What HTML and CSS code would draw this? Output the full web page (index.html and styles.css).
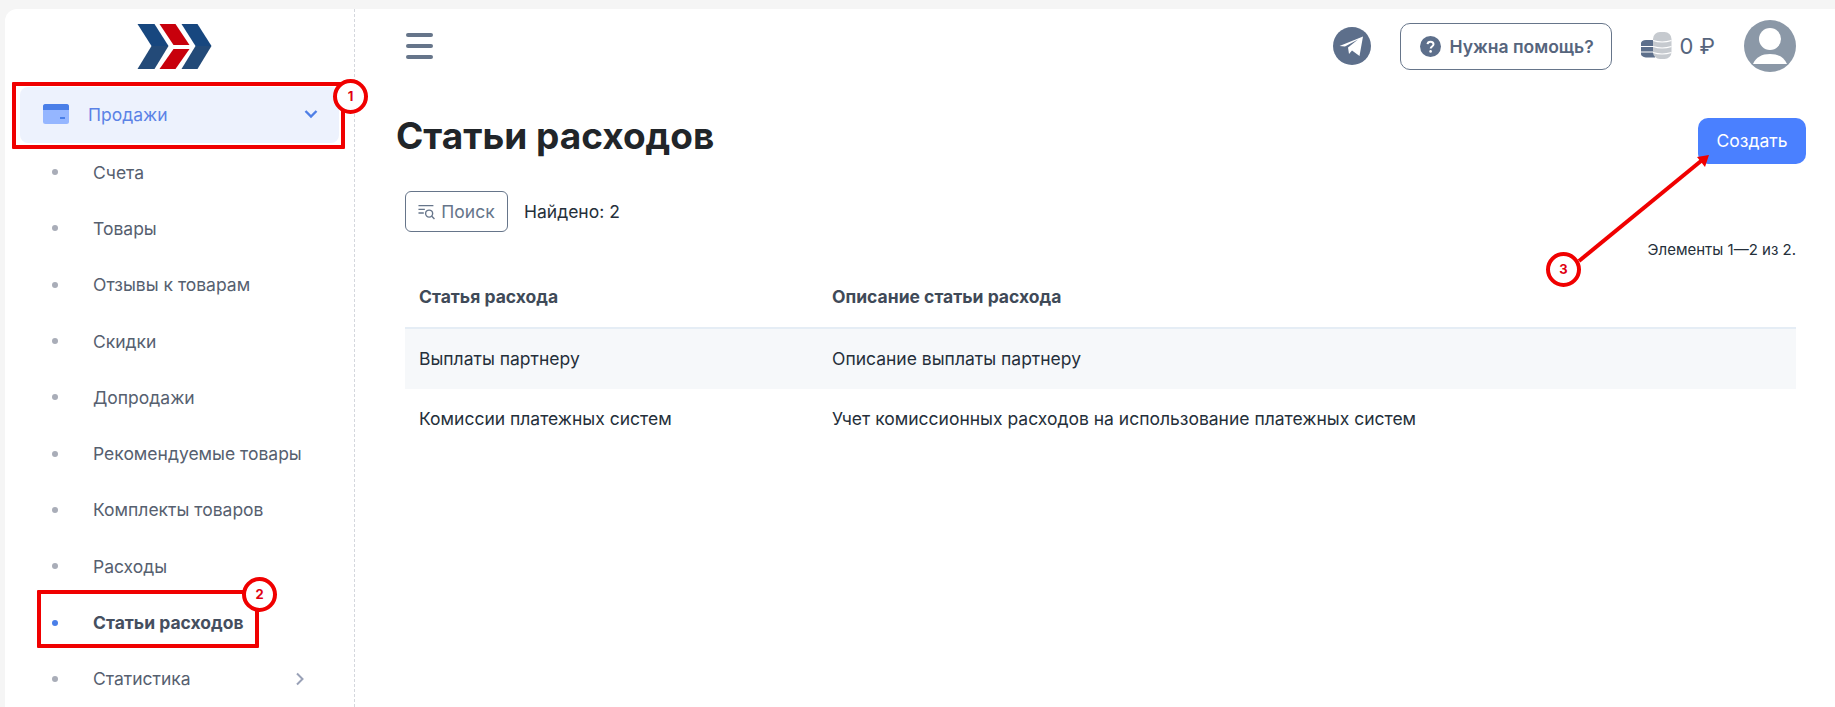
FILE: index.html
```html
<!DOCTYPE html>
<html lang="ru">
<head>
<meta charset="utf-8">
<title>Статьи расходов</title>
<link rel="stylesheet" href="styles.css">
</head>
<body>
<div class="app">
  <aside class="sidebar">
    <div class="logo">
      <svg width="76" height="46" viewBox="0 0 75 46">
        <path d="M0 0H17L31 22H14Z" fill="#17477f"/>
        <path d="M14 22H31L17 45H0Z" fill="#234a78"/>
        <path d="M22 0H38L52 21H36Z" fill="#c8000c"/>
        <path d="M36 25H52L38 45H22Z" fill="#c8000c"/>
        <path d="M44 0H60L74 22H58Z" fill="#17477f"/>
        <path d="M58 22H74L60 45H44Z" fill="#234a78"/>
      </svg>
    </div>
    <nav class="menu">
      <a class="menu-head">
        <svg class="card-icon" width="26" height="20" viewBox="0 0 26 20">
          <rect width="26" height="20" rx="2.5" fill="#95b6ff"/>
          <path d="M0 2.5A2.5 2.5 0 0 1 2.5 0h21A2.5 2.5 0 0 1 26 2.5V6H0Z" fill="#4a7fe8"/>
          <rect x="17" y="13" width="5" height="2" fill="#4a7fe8"/>
        </svg>
        <span class="menu-head-label">Продажи</span>
        <svg width="14" height="10" viewBox="0 0 14 10"><path d="M1.500 2 7 7.500 12.500 2" fill="none" stroke="#4f7fe6" stroke-width="2.400"/></svg>
      </a>
      <ul class="submenu">
        <li class="sub-item"><i class="dot"></i>Счета</li>
        <li class="sub-item"><i class="dot"></i>Товары</li>
        <li class="sub-item"><i class="dot"></i>Отзывы к товарам</li>
        <li class="sub-item"><i class="dot"></i>Скидки</li>
        <li class="sub-item"><i class="dot"></i>Допродажи</li>
        <li class="sub-item"><i class="dot"></i>Рекомендуемые товары</li>
        <li class="sub-item"><i class="dot"></i>Комплекты товаров</li>
        <li class="sub-item"><i class="dot"></i>Расходы</li>
        <li class="sub-item current"><i class="dot"></i>Статьи расходов</li>
        <li class="sub-item"><i class="dot"></i>Статистика
          <svg class="chev" width="10" height="14" viewBox="0 0 10 14"><path d="M2 1.500 7.500 7 2 12.500" fill="none" stroke="#99a1b7" stroke-width="2"/></svg>
        </li>
      </ul>
    </nav>
  </aside>
  <main class="main">
    <header class="topbar">
      <button class="burger" aria-label="Меню"><span></span><span></span><span></span></button>
      <div class="top-right">
        <svg width="38" height="38" viewBox="0 0 38 38">
          <circle cx="19" cy="19" r="19" fill="#5d6f8b"/>
          <path d="M6.500 19 30 9.500 26.500 29 19 23.500l-3 3.500-1-6.500 10-8-13 7Z" fill="#fff"/>
        </svg>
        <a class="help">
          <svg width="21" height="21" viewBox="0 0 21 21"><circle cx="10.500" cy="10.500" r="10.500" fill="#5d6f8b"/><path d="M7.500 8.200c.2-1.700 1.400-2.500 3-2.500 1.800 0 3 1 3 2.500 0 2.300-2.800 2.200-2.800 4.300" fill="none" stroke="#fff" stroke-width="2"/><circle cx="10.600" cy="15.400" r="1.300" fill="#fff"/></svg>
          Нужна помощь?
        </a>
        <div class="balance">
          <svg width="31" height="28" viewBox="0 0 31 28">
            <path d="M14 8H5C2 8 0 9.500 0 11v11c0 2 3 3.500 6 3.500h8Z" fill="#5d6f8b"/>
            <path d="M0 14.500h14M0 20h14" stroke="#fff" stroke-width="1.200"/>
            <rect x="12" y="0" width="18.500" height="27" rx="7" fill="#c6cacf"/>
            <path d="M12 8.500q9 3 18.500 0M12 14.500q9 3 18.500 0M12 20.500q9 3 18.500 0" fill="none" stroke="#fff" stroke-width="1.200"/>
          </svg>
          <span>0 ₽</span>
        </div>
        <svg width="52" height="52" viewBox="0 0 52 52">
          <circle cx="26" cy="26" r="26" fill="#8b98a7"/>
          <circle cx="26" cy="19" r="11" fill="#fff"/>
          <path d="M9 44C12 37 18 34 26 34s14 3 17 10Z" fill="#fff"/>
        </svg>
      </div>
    </header>
    <div class="title-row">
      <h1 class="title">Статьи расходов</h1>
      <a class="create">Создать</a>
    </div>
    <div class="tools">
      <a class="search">
        <svg width="18" height="16" viewBox="0 0 16 15"><g fill="none" stroke="#66758a" stroke-width="1.300"><path d="M0 1.500H14M0 5H6M0 8.500H5"/><circle cx="10" cy="9" r="3.300"/><path d="M12.500 11.500 15 14"/></g></svg>
        Поиск
      </a>
      <span class="found">Найдено: 2</span>
    </div>
    <div class="summary">Элементы 1—2 из 2.</div>
    <table class="grid">
      <thead>
        <tr><th class="col-a">Статья расхода</th><th>Описание статьи расхода</th></tr>
      </thead>
      <tbody>
        <tr class="odd"><td>Выплаты партнеру</td><td>Описание выплаты партнеру</td></tr>
        <tr><td>Комиссии платежных систем</td><td>Учет комиссионных расходов на использование платежных систем</td></tr>
      </tbody>
    </table>
  </main>
</div>

<div class="mark box-1"></div>
<div class="num num-1">1</div>
<div class="mark box-2"></div>
<div class="num num-2">2</div>
<svg class="arrow" width="160" height="130" viewBox="0 0 160 130">
  <path d="M4 126 126 26" stroke="#f00000" stroke-width="4" fill="none"/>
  <path d="M134 20 130 32 122 22Z" fill="#f00000"/>
</svg>
<div class="num num-3">3</div>
</body>
</html>
```

FILE: styles.css
```css
* { box-sizing: border-box; }
html, body { margin: 0; height: 707px; overflow: hidden; }
body {
  background: #f5f5f5;
  font-family: Inter, "Noto Sans", sans-serif;
  color: #252f3a;
  padding: 9px 0 0 5px;
  position: relative;
}
.app {
  display: flex;
  height: 698px;
  background: #fff;
  border-top-left-radius: 12px;
}
.sidebar {
  width: 350px;
  flex: none;
  border-right: 1px dashed #d4d7dd;
}
.logo {
  height: 78px;
  padding: 15px 0 0 132px;
}
.logo svg { display: block; }
.menu { padding: 0 15px; }
.menu-head {
  display: flex;
  align-items: center;
  height: 56px;
  background: #edf2fd;
  border-radius: 8px;
  padding: 0 21px 2px 23px;
  color: #5b82e6;
  font-size: 17.5px;
}
.menu-head-label { flex: 1; margin-left: 19px; }
.submenu { list-style: none; margin: 0; padding: 1px 0 0; }
.sub-item {
  display: flex;
  align-items: center;
  height: 56.3px;
  font-size: 17.5px;
  color: #56606f;
  padding-left: 32px;
  padding-right: 34px;
}
.dot {
  width: 6px;
  height: 6px;
  border-radius: 50%;
  background: #a9adb8;
  margin-right: 35px;
  flex: none;
}
.current { font-weight: 700; color: #454f5f; }
.current .dot { background: #4a7fe8; }
.chev { margin-left: auto; }

.main { flex: 1; padding: 0 39px 0 41px; min-width: 0; }
.topbar {
  display: flex;
  justify-content: space-between;
  align-items: center;
  height: 60px;
  padding-left: 10px;
  margin-top: 7px;
}
.burger {
  display: flex;
  flex-direction: column;
  gap: 7px;
  width: 27px;
  padding: 0;
  border: 0;
  background: none;
}
.burger span { display: block; height: 4px; width: 27px; background: #66758a; border-radius: 2px; }
.top-right { display: flex; align-items: center; }
.help {
  display: flex;
  align-items: center;
  gap: 9px;
  width: 212px;
  height: 47px;
  margin-left: 29px;
  padding-left: 19px;
  border: 1px solid #66758a;
  border-radius: 10px;
  color: #56657d;
  font-size: 17.5px;
  font-weight: 600;
}
.balance {
  display: flex;
  align-items: center;
  gap: 8px;
  margin-left: 29px;
  margin-right: 29px;
  font-size: 22px;
  color: #56657d;
}
.title-row {
  display: flex;
  justify-content: space-between;
  align-items: flex-start;
  margin-top: 42px;
  margin-right: -10px;
}
.title { margin: -5px 0 0; font-size: 37px; font-weight: 700; color: #212529; line-height: 46px; }
.create {
  width: 108px;
  height: 46px;
  line-height: 46px;
  text-align: center;
  background: #4a80ff;
  color: #fff;
  border-radius: 10px;
  font-size: 17.5px;
}
.tools {
  display: flex;
  align-items: center;
  margin: 27px 0 0 9px;
  gap: 16px;
}
.search {
  display: flex;
  align-items: center;
  justify-content: center;
  gap: 5px;
  width: 103px;
  height: 41px;
  border: 1px solid #66758a;
  border-radius: 6px;
  color: #66758a;
  font-size: 17.5px;
}
.found { font-size: 17.5px; color: #252f3a; }
.summary { text-align: right; font-size: 15px; color: #252f3a; margin-top: 9px; line-height: 18px; }
.grid {
  width: 1391px;
  margin-left: 9px;
  margin-top: 11px;
  border-collapse: collapse;
}
.grid th, .grid td { text-align: left; padding: 0 14px; font-size: 17.5px; }
.grid th { height: 58px; padding-bottom: 4px; font-weight: 700; color: #3f4a58; border-bottom: 2px solid #e5edf5; }
.grid td { height: 61px; padding-bottom: 2px; color: #252f3a; }
.col-a { width: 413px; }
.odd { background: #f6f8fa; }

.mark { position: absolute; border: 4px solid #f00000; border-radius: 1px; }
.box-1 { left: 12px; top: 82px; width: 333px; height: 67px; }
.box-2 { left: 37px; top: 590px; width: 222px; height: 58px; }
.num {
  position: absolute;
  width: 35px;
  height: 35px;
  border: 4px solid #f00000;
  border-radius: 50%;
  background: #fff;
  color: #e00012;
  font-size: 13px;
  font-weight: 700;
  line-height: 27px;
  text-align: center;
}
.num-1 { left: 333px; top: 79px; }
.num-2 { left: 242px; top: 577px; }
.num-3 { left: 1546px; top: 252px; }
.arrow { position: absolute; left: 1575px; top: 135px; }
```
